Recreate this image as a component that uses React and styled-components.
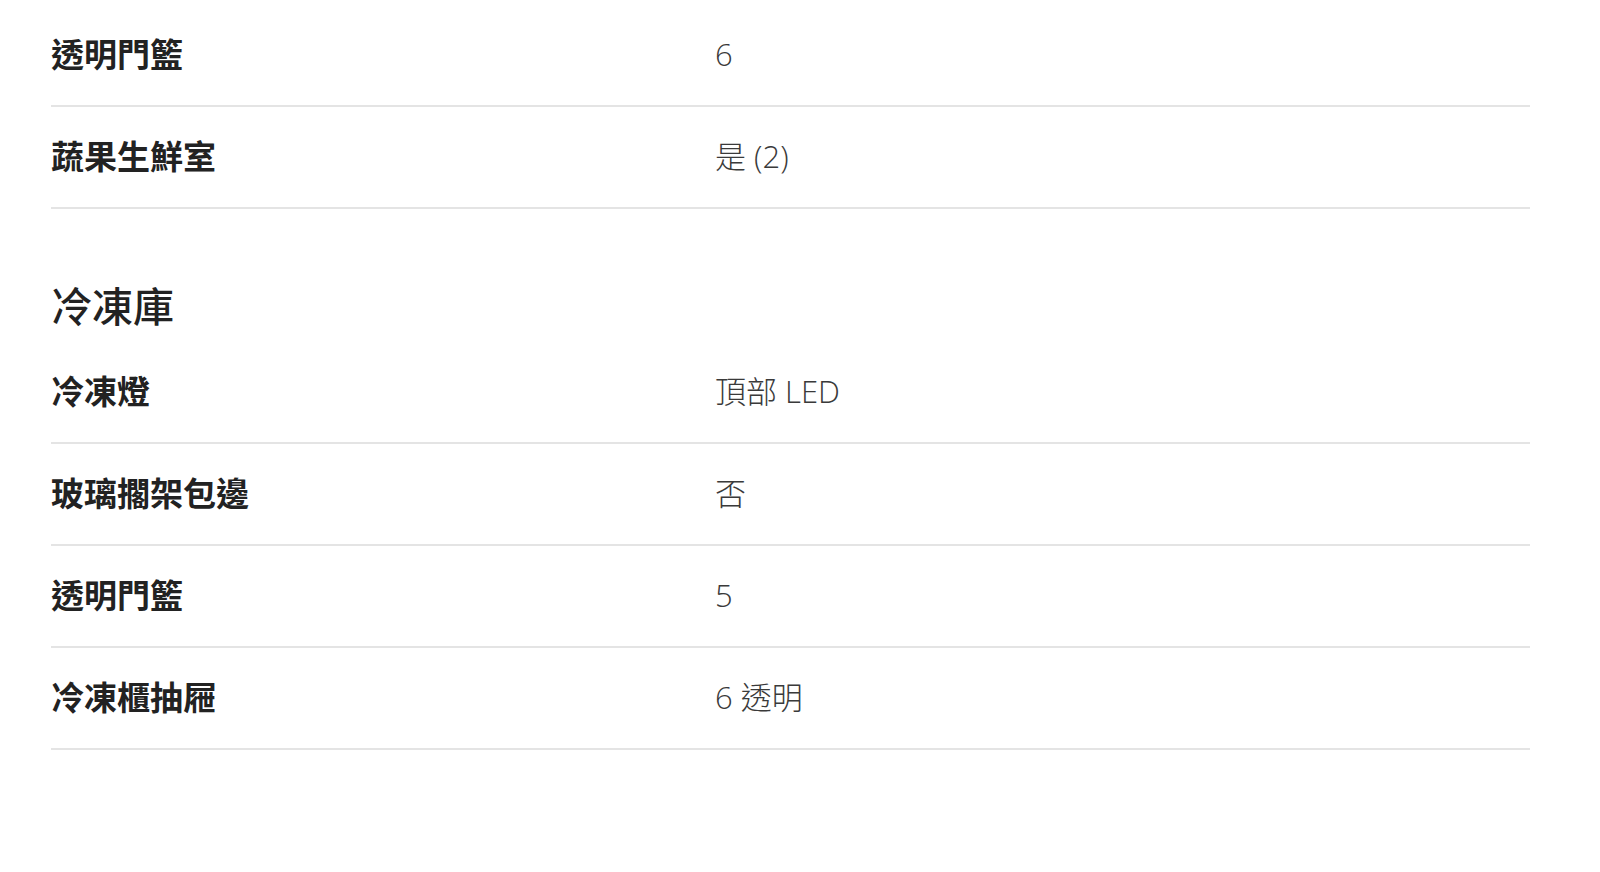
import React from "react";
import styled, { createGlobalStyle } from "styled-components";

const Global = createGlobalStyle`
  html, body { margin: 0; padding: 0; background: #ffffff; }
  body { font-family: "Noto Sans CJK TC", "Noto Sans", sans-serif; }
`;

const Page = styled.div`
  padding: 5px 0 0 51px;
  width: 1479px;
`;

const Row = styled.div`
  display: grid;
  grid-template-columns: 664px 1fr;
  align-items: center;
  height: 100px;
  border-bottom: 2px solid #e4e4e4;
`;

const Label = styled.div`
  font-family: "Noto Sans CJK TC", sans-serif;
  font-weight: 700;
  font-size: 33px;
  line-height: 40px;
  padding-bottom: 5px;
  color: #222222;
`;

const Value = styled.div`
  font-family: "Open Sans", "Noto Sans CJK TC", sans-serif;
  font-weight: 300;
  font-size: 31px;
  line-height: 40px;
  padding-bottom: 2px;
  color: #3a3a3a;
`;

const Heading = styled.h2`
  margin: 0;
  padding: 71px 0 14px;
  font-family: "Noto Sans CJK TC", sans-serif;
  font-weight: 500;
  font-size: 41px;
  line-height: 48px;
  color: #222222;
`;

const fridge = [
  ["透明門籃", "6"],
  ["蔬果生鮮室", "是 (2)"],
];

const freezer = [
  ["冷凍燈", "頂部 LED"],
  ["玻璃擱架包邊", "否"],
  ["透明門籃", "5"],
  ["冷凍櫃抽屜", "6 透明"],
];

const SpecRow = ({ label, value }) => (
  <Row>
    <Label>{label}</Label>
    <Value>{value}</Value>
  </Row>
);

export default function App() {
  return (
    <>
      <Global />
      <Page>
        {fridge.map(([l, v], i) => (
          <SpecRow key={"a" + i} label={l} value={v} />
        ))}
        <Heading>冷凍庫</Heading>
        {freezer.map(([l, v], i) => (
          <SpecRow key={"b" + i} label={l} value={v} />
        ))}
      </Page>
    </>
  );
}
